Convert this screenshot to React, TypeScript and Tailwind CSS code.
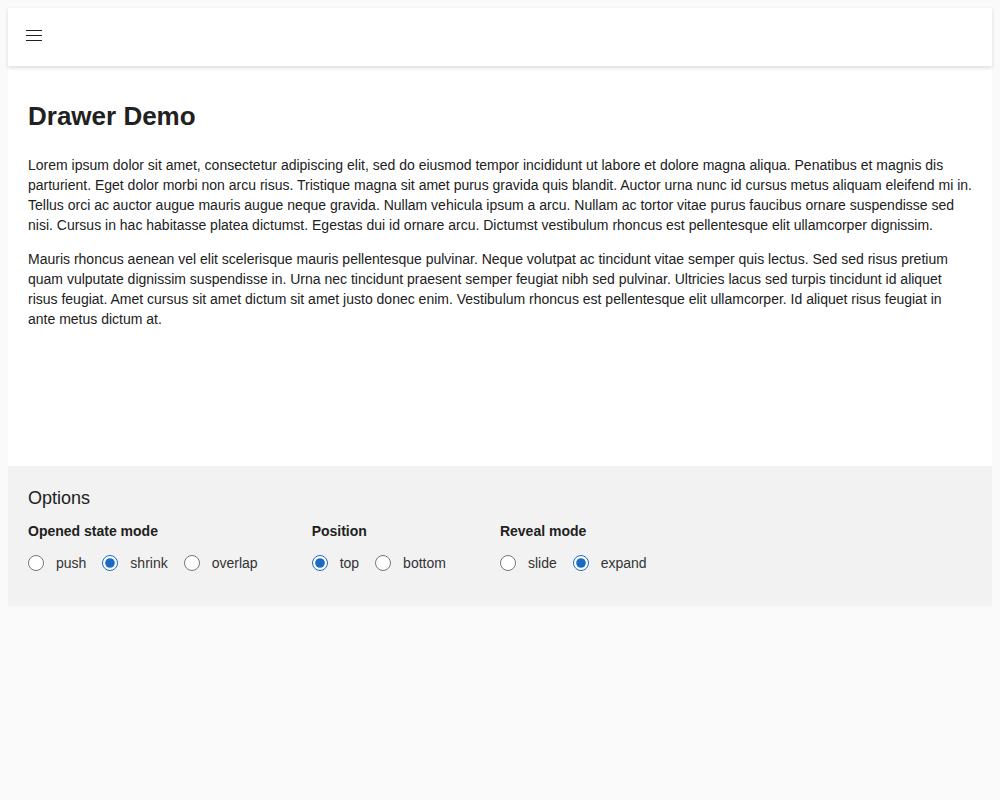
import React, { useState } from 'react';

const FONT = { fontFamily: '"Liberation Sans", Arial, sans-serif' };

const GROUPS = [
  { id: 'mode', label: 'Opened state mode', options: ['push', 'shrink', 'overlap'], initial: 'shrink' },
  { id: 'position', label: 'Position', options: ['top', 'bottom'], initial: 'top' },
  { id: 'reveal', label: 'Reveal mode', options: ['slide', 'expand'], initial: 'expand' },
];

function MenuIcon() {
  return (
    <svg width="16" height="12" viewBox="0 0 16 12" className="block">
      <rect x="0" y="0" width="16" height="1" fill="#212121" />
      <rect x="0" y="5" width="16" height="1" fill="#212121" />
      <rect x="0" y="10" width="16" height="1" fill="#212121" />
    </svg>
  );
}

function RadioGroup({ id, label, options, initial }: { id: string; label: string; options: string[]; initial: string }) {
  const [value, setValue] = useState(initial);
  return (
    <div className="flex flex-col">
      <div className="text-sm leading-5 font-bold text-[#212121]">{label}</div>
      <div className="flex items-center gap-4 mt-3">
        {options.map((opt) => (
          <label key={opt} className="flex items-center gap-3 text-sm leading-5 text-[#333] cursor-pointer">
            <input
              type="radio"
              name={id}
              checked={value === opt}
              onChange={() => setValue(opt)}
              className="w-4 h-4 m-0 accent-[#1a6bc4]"
            />
            {opt}
          </label>
        ))}
      </div>
    </div>
  );
}

export default function App() {
  return (
    <div className="min-h-screen bg-[#fafafa] p-2 text-[#212121]" style={FONT}>
      {/* Toolbar */}
      <header className="relative z-10 h-[58px] bg-white flex items-center px-[18px] shadow-[0_2px_4px_rgba(0,0,0,0.14)]">
        <button className="p-0 -mt-[2px]">
          <MenuIcon />
        </button>
      </header>

      {/* Content */}
      <main className="h-[400px] bg-white px-5 pt-[35px]">
        <h1 className="text-[26px] leading-[30px] font-bold mb-[24px]">Drawer Demo</h1>
        <p className="text-sm leading-5 mb-[14px]">
          Lorem ipsum dolor sit amet, consectetur adipiscing elit, sed do eiusmod tempor incididunt ut labore et dolore magna aliqua. Penatibus et magnis dis parturient. Eget dolor morbi non arcu risus. Tristique magna sit amet purus gravida quis blandit. Auctor urna nunc id cursus metus aliquam eleifend mi in. Tellus orci ac auctor augue mauris augue neque gravida. Nullam vehicula ipsum a arcu. Nullam ac tortor vitae purus faucibus ornare suspendisse sed nisi. Cursus in hac habitasse platea dictumst. Egestas dui id ornare arcu. Dictumst vestibulum rhoncus est pellentesque elit ullamcorper dignissim.
        </p>
        <p className="text-sm leading-5 pr-5">
          Mauris rhoncus aenean vel elit scelerisque mauris pellentesque pulvinar. Neque volutpat ac tincidunt vitae semper quis lectus. Sed sed risus pretium quam vulputate dignissim suspendisse in. Urna nec tincidunt praesent semper feugiat nibh sed pulvinar. Ultricies lacus sed turpis tincidunt id aliquet risus feugiat. Amet cursus sit amet dictum sit amet justo donec enim. Vestibulum rhoncus est pellentesque elit ullamcorper. Id aliquet risus feugiat in ante metus dictum at.
        </p>
      </main>

      {/* Options */}
      <section className="bg-[#f2f2f2] px-5 pt-[21px] pb-[33px]">
        <h2 className="text-lg leading-[22px] text-[#212121]">Options</h2>
        <div className="flex gap-[54px] mt-3">
          {GROUPS.map((g) => (
            <RadioGroup key={g.id} {...g} />
          ))}
        </div>
      </section>
    </div>
  );
}
